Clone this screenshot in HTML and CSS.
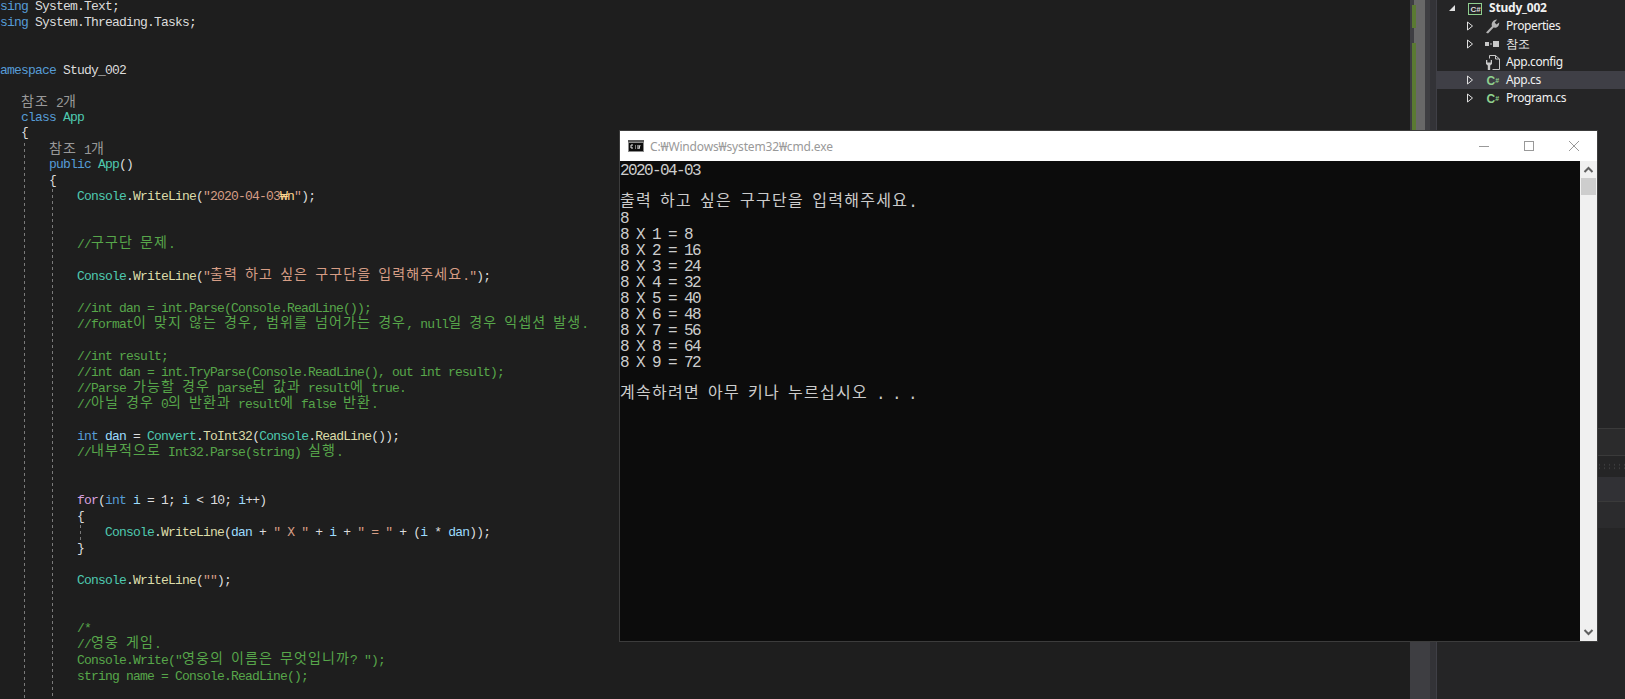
FILE: index.html
```html
<!DOCTYPE html>
<html lang="ko">
<head>
<meta charset="utf-8">
<title>Study_002</title>
<link rel="stylesheet" href="styles.css">
</head>
<body>
<div class="ide">
  <main class="editor">
    <span class="guide g1"></span><span class="guide g2"></span><span class="guide g3"></span>
<div class="l"><i class="kw">sing</i> System.Text;</div>
<div class="l"><i class="kw">sing</i> System.Threading.Tasks;</div>
<div class="l"> </div>
<div class="l"> </div>
<div class="l"><i class="kw">amespace</i> <i class="pl">Study_002</i></div>
<div class="l short"> </div>
<div class="l lens">   <b>참조</b> 2<b>개</b></div>
<div class="l short">   <i class="kw">class</i> <i class="ty">App</i></div>
<div class="l">   {</div>
<div class="l lens">       <b>참조</b> 1<b>개</b></div>
<div class="l">       <i class="kw">public</i> <i class="ty">App</i>()</div>
<div class="l">       {</div>
<div class="l">           <i class="ty">Console</i>.<i class="me">WriteLine</i>(<i class="st">"2020-04-03<i class="es">₩n</i>"</i>);</div>
<div class="l"> </div>
<div class="l"> </div>
<div class="l cm">           //<b>구구단</b> <b>문제</b>.</div>
<div class="l"> </div>
<div class="l">           <i class="ty">Console</i>.<i class="me">WriteLine</i>(<i class="st">"<b>출력</b> <b>하고</b> <b>싶은</b> <b>구구단을</b> <b>입력해주세요</b>."</i>);</div>
<div class="l"> </div>
<div class="l cm">           //int dan = int.Parse(Console.ReadLine());</div>
<div class="l cm">           //format<b>이</b> <b>맞지</b> <b>않는</b> <b>경우</b>, <b>범위를</b> <b>넘어가는</b> <b>경우</b>, null<b>일</b> <b>경우</b> <b>익셉션</b> <b>발생</b>.</div>
<div class="l"> </div>
<div class="l cm">           //int result;</div>
<div class="l cm">           //int dan = int.TryParse(Console.ReadLine(), out int result);</div>
<div class="l cm">           //Parse <b>가능할</b> <b>경우</b> parse<b>된</b> <b>값과</b> result<b>에</b> true.</div>
<div class="l cm">           //<b>아닐</b> <b>경우</b> 0<b>의</b> <b>반환과</b> result<b>에</b> false <b>반환</b>.</div>
<div class="l"> </div>
<div class="l">           <i class="kw">int</i> <i class="va">dan</i> = <i class="ty">Convert</i>.<i class="me">ToInt32</i>(<i class="ty">Console</i>.<i class="me">ReadLine</i>());</div>
<div class="l cm">           //<b>내부적으로</b> Int32.Parse(string) <b>실행</b>.</div>
<div class="l"> </div>
<div class="l"> </div>
<div class="l">           <i class="ct">for</i>(<i class="kw">int</i> <i class="va">i</i> = 1; <i class="va">i</i> &lt; 10; <i class="va">i</i>++)</div>
<div class="l">           {</div>
<div class="l">               <i class="ty">Console</i>.<i class="me">WriteLine</i>(<i class="va">dan</i> + <i class="st">" X "</i> + <i class="va">i</i> + <i class="st">" = "</i> + (<i class="va">i</i> * <i class="va">dan</i>));</div>
<div class="l">           }</div>
<div class="l"> </div>
<div class="l">           <i class="ty">Console</i>.<i class="me">WriteLine</i>(<i class="st">""</i>);</div>
<div class="l"> </div>
<div class="l"> </div>
<div class="l cm">           /*</div>
<div class="l cm">           //<b>영웅</b> <b>게임</b>.</div>
<div class="l cm">           Console.Write("<b>영웅의</b> <b>이름은</b> <b>무엇입니까</b>? ");</div>
<div class="l cm">           string name = Console.ReadLine();</div>
  </main>

  <div class="minimap">
    <div class="map-gutter"><span class="mark m1"></span><span class="mark m2"></span></div>
    <div class="map-thumb"></div>
    <div class="map-a"></div>
    <div class="map-b"></div>
  </div>

  <aside class="explorer">
    <div class="row project">
      <svg class="expander" width="8" height="8" viewBox="0 0 8 8"><path d="M7 1V7H1Z" fill="#e0e0e0"/></svg>
      <svg class="ico" width="16" height="16" viewBox="0 0 16 16"><rect x="1.5" y="3.5" width="13" height="11" fill="none" stroke="#8fcf8f"/><text x="3.500" y="12" class="ico-p">C#</text></svg>
      <span class="name bold">Study_002</span>
    </div>
    <div class="row child">
      <svg class="expander" width="8" height="10" viewBox="0 0 8 10"><path d="M1.5 1V9L6.5 5Z" fill="none" stroke="#e0e0e0"/></svg>
      <svg class="ico" width="16" height="16" viewBox="0 0 16 16"><path d="M1 14.5 7 8.3C6 5.5 7.5 2 12.2 1.6L9.7 4.4 11.4 6.6 14.2 4.4C14.4 8.3 11.5 10.3 8.6 9.6L3 15.5Z" fill="#b4b4b4"/></svg>
      <span class="name">Properties</span>
    </div>
    <div class="row child">
      <svg class="expander" width="8" height="10" viewBox="0 0 8 10"><path d="M1.5 1V9L6.5 5Z" fill="none" stroke="#e0e0e0"/></svg>
      <svg class="ico" width="16" height="16" viewBox="0 0 16 16"><rect x="0" y="6" width="4" height="4" fill="#c8c8c8"/><rect x="5" y="7.500" width="2" height="1" fill="#c8c8c8"/><rect x="8" y="5" width="6" height="6" fill="#c8c8c8"/></svg>
      <span class="name">참조</span>
    </div>
    <div class="row child">
      <span class="expander-gap"></span>
      <svg class="ico" width="16" height="16" viewBox="0 0 16 16"><path d="M4.500 4.500V1.500H10.500L14.500 5V15.500H7.500M10.500 1.500V5H14.500" fill="none" stroke="#c8c8c8"/><path d="M1 6V10L2.800 11.500V16H5.200V11.500L7 10V6H5.700V8.500H2.300V6Z" fill="#c8c8c8"/></svg>
      <span class="name">App.config</span>
    </div>
    <div class="row child selected">
      <svg class="expander" width="8" height="10" viewBox="0 0 8 10"><path d="M1.5 1V9L6.5 5Z" fill="none" stroke="#e0e0e0"/></svg>
      <svg class="ico" width="16" height="16" viewBox="0 0 16 16"><text x="1.500" y="13" class="ico-c">C<tspan class="ico-h" dy="-2.500">#</tspan></text></svg>
      <span class="name">App.cs</span>
    </div>
    <div class="row child">
      <svg class="expander" width="8" height="10" viewBox="0 0 8 10"><path d="M1.5 1V9L6.5 5Z" fill="none" stroke="#e0e0e0"/></svg>
      <svg class="ico" width="16" height="16" viewBox="0 0 16 16"><text x="1.500" y="13" class="ico-c">C<tspan class="ico-h" dy="-2.500">#</tspan></text></svg>
      <span class="name">Program.cs</span>
    </div>
    <div class="dock">
      <div class="dock-a"></div>
      <div class="dock-dots"></div>
      <div class="dock-b"></div>
      <div class="dock-c"></div>
    </div>
  </aside>
</div>

<section class="console">
  <header class="titlebar">
    <svg class="cmd-icon" width="16" height="12" viewBox="0 0 16 12"><rect width="16" height="12" fill="#8c8c8c"/><rect x="0" y="0" width="16" height="2" fill="#5a5a5a"/><rect x="1" y="3" width="14" height="8" fill="#0c0c0c"/><path d="M3 5H5M3 5V8H5M7 6H8M7 8H8M10 5V9M12 5 11 9" stroke="#e6e6e6" fill="none"/></svg>
    <span class="title">C:₩Windows₩system32₩cmd.exe</span>
    <div class="controls">
      <svg width="10" height="10" viewBox="0 0 10 10"><path d="M0 5.500H10" stroke="#999"/></svg>
      <svg width="10" height="10" viewBox="0 0 10 10"><rect x=".5" y=".5" width="9" height="9" fill="none" stroke="#999"/></svg>
      <svg width="10" height="10" viewBox="0 0 10 10"><path d="M0 0 10 10M10 0 0 10" stroke="#999"/></svg>
    </div>
  </header>
  <div class="console-body">
    <div class="output">
<div class="cl">2020-04-03</div>
<div class="cl"> </div>
<div class="cl"><b>출력</b> <b>하고</b> <b>싶은</b> <b>구구단을</b> <b>입력해주세요</b>.</div>
<div class="cl">8</div>
<div class="cl">8 X 1 = 8</div>
<div class="cl">8 X 2 = 16</div>
<div class="cl">8 X 3 = 24</div>
<div class="cl">8 X 4 = 32</div>
<div class="cl">8 X 5 = 40</div>
<div class="cl">8 X 6 = 48</div>
<div class="cl">8 X 7 = 56</div>
<div class="cl">8 X 8 = 64</div>
<div class="cl">8 X 9 = 72</div>
<div class="cl"> </div>
<div class="cl"><b>계속하려면</b> <b>아무</b> <b>키나</b> <b>누르십시오</b> . . .</div>
    </div>
    <div class="vscroll">
      <svg class="arrow" width="17" height="17" viewBox="0 0 17 17"><path d="M4.500 11 8.500 7 12.500 11" fill="none" stroke="#606060" stroke-width="2"/></svg>
      <div class="vthumb"></div>
      <div class="vtrack"></div>
      <svg class="arrow" width="17" height="17" viewBox="0 0 17 17"><path d="M4.500 6 8.500 10 12.500 6" fill="none" stroke="#606060" stroke-width="2"/></svg>
    </div>
  </div>
</section>
</body>
</html>
```
FILE: styles.css
```css
* { box-sizing: border-box; }
html, body { margin: 0; height: 100%; overflow: hidden; background: #1e1e1e; }

.ide { display: flex; width: 1625px; height: 699px; }

.editor {
  position: relative;
  width: 1410px;
  flex: none;
  overflow: hidden;
  background: #1e1e1e;
  color: #dcdcdc;
  font: 13px/14px "Liberation Mono", monospace;
  letter-spacing: -0.8px;
}
.l { height: 16px; white-space: pre; }
.l.lens { color: #999; line-height: 18px; }
.l.short { height: 15px; }
.l i { font-style: normal; }
.l b {
  font: 400 14px/0 "Noto Sans CJK KR", sans-serif;
  letter-spacing: .08em;
  vertical-align: 1px;
}
.kw { color: #569cd6; }
.ty { color: #4ec9b0; }
.me { color: #dcdcaa; }
.st { color: #d69d85; }
.es { color: #ffd68f; }
.cm { color: #57a64a; }
.va { color: #9cdcfe; }
.ct { color: #d8a0df; }
.pl { color: #dcdcdc; }

.guide { position: absolute; width: 1px; background: repeating-linear-gradient(#7a7a7a 0 3px, transparent 3px 6px); }
.g1 { left: 24px; top: 143px; bottom: 0; }
.g2 { left: 52px; top: 189px; bottom: 0; }
.g3 { left: 80px; top: 525px; height: 16px; }

.minimap { display: flex; width: 27px; flex: none; background: #333337; }
.map-gutter { position: relative; width: 4px; background: #3e3e42; }
.mark { position: absolute; left: 2px; width: 4px; background: #5a7a32; }
.m1 { top: 5px; height: 23px; }
.m2 { top: 43px; height: 500px; }
.map-thumb { width: 11px; background: linear-gradient(#686868 545px, #3e3e42 545px); }
.map-a { width: 5px; background: #3e3e42; }
.map-b { width: 7px; background: #333337; border-right: 1px solid #3f3f46; }

.explorer {
  position: relative;
  flex: 1;
  background: #252526;
  color: #f1f1f1;
  font: 12px/18px "Noto Sans", sans-serif;
  margin-top: -1px;
}
.row { display: flex; align-items: center; height: 18px; white-space: nowrap; }
.row.project { padding-left: 11px; }
.row.child { padding-left: 29px; }
.row.selected { background: #3f3f46; }
.expander { flex: none; width: 8px; }
.expander-gap { flex: none; width: 8px; }
.ico { flex: none; margin-left: 11px; }
.name { margin-left: 5px; letter-spacing: -.4px; }
.bold { font-weight: 700; margin-left: 6px; letter-spacing: -.2px; }
.ico-p { font: 700 8px "Liberation Sans", sans-serif; fill: #dcdcdc; }
.ico-c { font: 700 12px "Liberation Sans", sans-serif; fill: #8fd18f; }
.ico-h { font-size: 7px; }

.dock { position: absolute; left: 160px; right: 0; top: 429px; }
.dock-a { height: 28px; background: #2b2b2c; border-top: 1px solid #3a3a3a; border-bottom: 1px solid #3a3a3a; }
.dock-dots { height: 7px; margin: 7px 0 7px; background-image: radial-gradient(#3c3c3e 1px, transparent 1px); background-size: 5px 3.5px; }
.dock-b { height: 25px; background: #313135; border-bottom: 1px solid #3a3a3a; }
.dock-c { height: 26px; background: #2b2b2d; }

.console {
  position: absolute;
  left: 619px;
  top: 130px;
  width: 979px;
  height: 512px;
  display: flex;
  flex-direction: column;
  border: 1px solid #3c3c3c;
  background: #0c0c0c;
}
.titlebar { display: flex; align-items: center; height: 30px; flex: none; background: #fff; padding-left: 8px; }
.cmd-icon { flex: none; margin-top: -1px; }
.title { margin-left: 6px; font: 12px "Noto Sans", sans-serif; letter-spacing: -.15px; color: #999; white-space: nowrap; }
.controls { margin-left: auto; display: flex; gap: 35px; padding-right: 18px; }
.console-body { flex: 1; display: flex; min-height: 0; }
.output {
  flex: 1;
  padding-top: 2px;
  color: #ccc;
  font: 16px/16px "Liberation Mono", monospace;
  letter-spacing: -1.6px;
}
.cl { height: 16px; white-space: pre; }
.cl b {
  font: 400 16px/0 "Noto Sans CJK KR", sans-serif;
  letter-spacing: .08em;
  vertical-align: 1px;
}
.vscroll { width: 17px; flex: none; display: flex; flex-direction: column; background: #f0f0f0; }
.arrow { flex: none; }
.vthumb { height: 17px; margin: 0 1px; background: #cdcdcd; flex: none; }
.vtrack { flex: 1; }
```
